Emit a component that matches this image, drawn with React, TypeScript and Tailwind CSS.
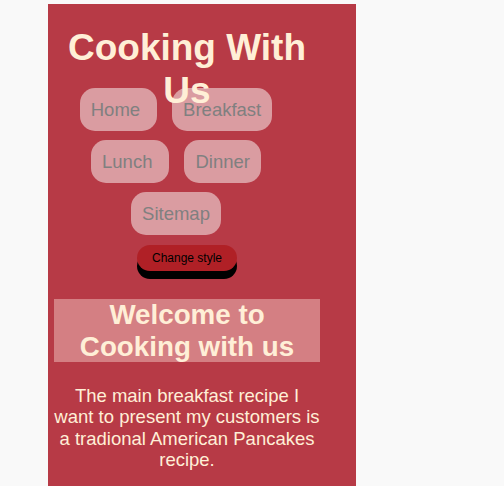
import React from "react";

export default function App() {
  const cream = "text-[#ffefd7]";
  return (
    <div className="min-h-screen bg-[#f9f9f9] pt-[4px] font-['Liberation_Sans',Arial,sans-serif]">
      <div className="ml-[48px] w-[308px] min-h-[500px] bg-[#b73a46] pl-[6px] pr-[36px] pt-[23px]">
        <h1 className={`relative z-10 h-[61px] text-center text-[37px] font-bold leading-[1.15] ${cream}`}>
          Cooking With Us
        </h1>
        <nav className="ml-[12px] w-[220px] flex flex-wrap justify-center gap-x-[15px] gap-y-[9px]">
          <a className="flex h-[43px] items-center rounded-[15px] bg-[#da9ca1] pl-[11px] pr-[17px] text-[18.5px] text-[#808080]">Home</a>
          <a className="flex h-[43px] items-center rounded-[15px] bg-[#da9ca1] px-[11px] text-[18.5px] text-[#808080]">Breakfast</a>
          <a className="flex h-[43px] items-center rounded-[15px] bg-[#da9ca1] pl-[11px] pr-[17px] text-[18.5px] text-[#808080]">Lunch</a>
          <a className="flex h-[43px] items-center rounded-[15px] bg-[#da9ca1] px-[11px] text-[18.5px] text-[#808080]">Dinner</a>
          <a className="flex h-[43px] items-center rounded-[15px] bg-[#da9ca1] px-[11px] text-[18.5px] text-[#808080]">Sitemap</a>
        </nav>
        <div className="mt-[10px] flex justify-center">
          <button className="h-[26px] w-[100px] rounded-full bg-[#b02026] text-[12px] text-black shadow-[0_8px_0_#000]">
            Change style
          </button>
        </div>
        <h2 className={`mt-[28px] h-[63px] bg-[#d47f83] text-center text-[27.75px] font-bold leading-[31.5px] ${cream}`}>
          Welcome to Cooking with us
        </h2>
        <p className={`mt-[23px] text-center text-[18.5px] leading-[1.15] ${cream}`}>
          The main breakfast recipe I want to present my customers is a tradional American Pancakes recipe.
        </p>
      </div>
    </div>
  );
}
